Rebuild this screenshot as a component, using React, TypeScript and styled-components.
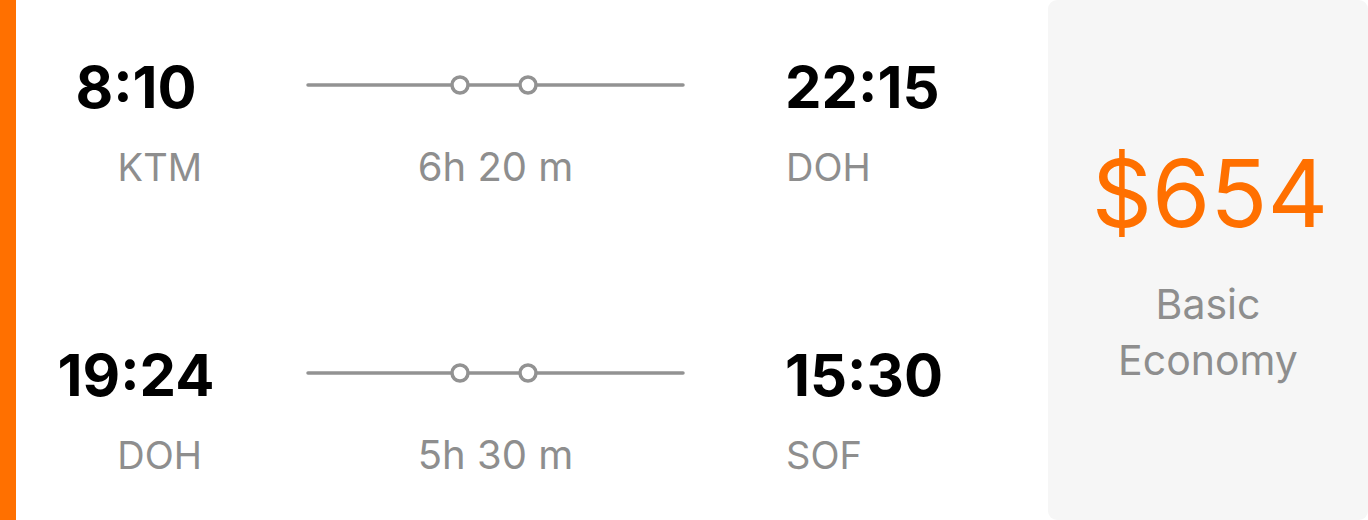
import styled, { createGlobalStyle } from "styled-components";

const GlobalStyle = createGlobalStyle`
    html, body {
        margin: 0;
        padding: 0;
        background: #ffffff;
    }
    body {
        font-family: Inter, "Liberation Sans", sans-serif;
    }
`;

const ORANGE = "#ff7000";
const GRAY = "#8e8e8e";

const Card = styled.div`
    display: flex;
    flex-direction: row;
    width: 1368px;
    height: 520px;
    background: #ffffff;
    overflow: hidden;
`;

const Accent = styled.div`
    width: 16px;
    flex-shrink: 0;
    background: ${ORANGE};
`;

const Flights = styled.div`
    flex: 1;
    display: flex;
    flex-direction: column;
    gap: 128px;
    padding-top: 47px;
`;

const FlightRow = styled.div`
    display: grid;
    grid-template-columns: 240px 379px 1fr;
    grid-template-rows: 80px 80px;
    column-gap: 50px;
    align-items: center;
`;

const Time = styled.div<{ $align: "center" | "left" }>`
    font-size: 58px;
    font-weight: 700;
    line-height: 1;
    color: #000000;
    text-align: ${p => p.$align};
    padding-left: ${p => (p.$align === "left" ? "50px" : "0")};
`;

const Airport = styled.div<{ $side: "from" | "to" }>`
    font-size: 38px;
    font-weight: 400;
    line-height: 1;
    color: ${GRAY};
    text-align: ${p => (p.$side === "from" ? "right" : "left")};
    padding-right: ${p => (p.$side === "from" ? "54px" : "0")};
    padding-left: ${p => (p.$side === "to" ? "51px" : "0")};
`;

const Duration = styled.div`
    font-size: 40px;
    font-weight: 400;
    line-height: 1;
    color: ${GRAY};
    text-align: center;
`;

const Track = styled.svg`
    display: block;
    width: 379px;
    height: 24px;
    margin-top: -4px;
`;

const PricePanel = styled.aside`
    width: 320px;
    flex-shrink: 0;
    background: #f6f6f6;
    border-radius: 9px;
    display: flex;
    flex-direction: column;
    align-items: center;
    justify-content: center;
    padding-top: 13px;
    box-sizing: border-box;
`;

const Price = styled.div`
    font-size: 94px;
    font-weight: 400;
    line-height: 1;
    color: ${ORANGE};
    margin-bottom: 36px;
    padding-left: 4px;
`;

const Fare = styled.div`
    font-size: 41px;
    line-height: 56px;
    color: ${GRAY};
    text-align: center;
`;

type Leg = {
    depart: string;
    from: string;
    arrive: string;
    to: string;
    duration: string;
};

const legs: Leg[] = [
    { depart: "8:10", from: "KTM", arrive: "22:15", to: "DOH", duration: "6h 20 m" },
    { depart: "19:24", from: "DOH", arrive: "15:30", to: "SOF", duration: "5h 30 m" },
];

function StopsLine() {
    return (
        <Track viewBox="0 0 379 24">
            <line x1="2" y1="12" x2="377" y2="12" stroke="#929292" strokeWidth="3.5" strokeLinecap="round" />
            <circle cx="154" cy="12" r="8" fill="#ffffff" stroke="#929292" strokeWidth="3.5" />
            <circle cx="222" cy="12" r="8" fill="#ffffff" stroke="#929292" strokeWidth="3.5" />
        </Track>
    );
}

export default function App() {
    return (
        <>
            <GlobalStyle />
            <Card>
                <Accent />
                <Flights>
                    {legs.map(leg => (
                        <FlightRow key={leg.depart}>
                            <Time $align="center">{leg.depart}</Time>
                            <StopsLine />
                            <Time $align="left">{leg.arrive}</Time>
                            <Airport $side="from">{leg.from}</Airport>
                            <Duration>{leg.duration}</Duration>
                            <Airport $side="to">{leg.to}</Airport>
                        </FlightRow>
                    ))}
                </Flights>
                <PricePanel>
                    <Price>$654</Price>
                    <Fare>Basic<br />Economy</Fare>
                </PricePanel>
            </Card>
        </>
    );
}
